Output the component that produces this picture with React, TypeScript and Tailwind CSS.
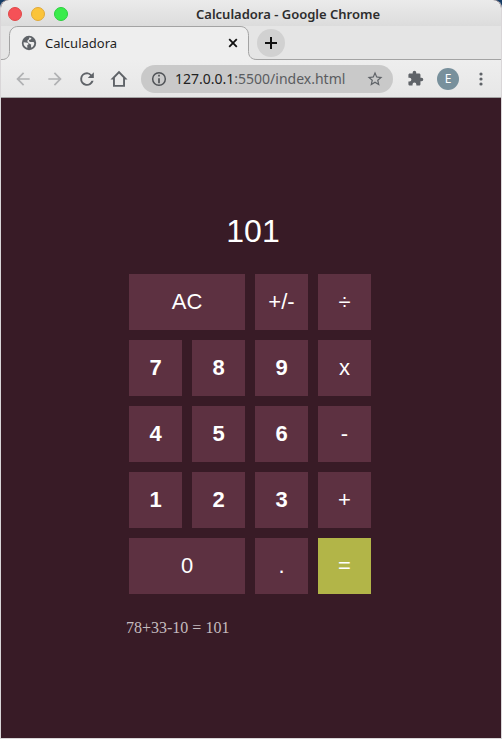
import React, { useState } from "react";

type Key = { label: string; className?: string };

const keys: Key[] = [
  { label: "AC", className: "col-span-2" },
  { label: "+/-" },
  { label: "÷" },
  { label: "7", className: "font-bold" },
  { label: "8", className: "font-bold" },
  { label: "9", className: "font-bold" },
  { label: "x" },
  { label: "4", className: "font-bold" },
  { label: "5", className: "font-bold" },
  { label: "6", className: "font-bold" },
  { label: "-" },
  { label: "1", className: "font-bold" },
  { label: "2", className: "font-bold" },
  { label: "3", className: "font-bold" },
  { label: "+" },
  { label: "0", className: "col-span-2" },
  { label: "." },
];

function TitleBar() {
  return (
    <header className="flex h-[26px] items-center rounded-t-lg bg-linear-to-b from-[#ebebeb] to-[#dcdcdc] pt-[2px] pl-[7px]">
      <div className="flex gap-[9px]">
        <button aria-label="Close" className="size-[14px] rounded-full border border-[#e04848] bg-[#f55157]" />
        <button aria-label="Minimize" className="size-[14px] rounded-full border border-[#e0a93a] bg-[#fbc43a]" />
        <button aria-label="Maximize" className="size-[14px] rounded-full border border-[#2bd03e] bg-[#3aec4c]" />
      </div>
      <h1 className="flex-1 pl-32 text-[13px] leading-5 font-semibold whitespace-nowrap text-[#2d2d2d]">
        Calculadora - Google Chrome
      </h1>
    </header>
  );
}

function TabStrip() {
  return (
    <div className="flex h-[34px] items-center bg-[#e5e5e5] shadow-[inset_0_-1px_0_#a3a3a3]">
      <div className="relative flex h-full w-64 shrink-0 items-center">
        <svg className="absolute inset-0" width="256" height="34" viewBox="0 0 256 34" aria-hidden="true">
          <path
            d="M0 33.5H1C5.500 33.5 8.500 31 8.500 25.500V9.500C8.500 4 12 .5 17 .5H239C244.500 .5 247.500 4 247.500 9.500V25.500C247.500 31 251 33.500 256 33.500V34H0Z"
            fill="#eeeeee"
          />
          <path
            d="M0 33.500H1C5.500 33.500 8.500 31 8.500 25.500V9.500C8.500 4 12 .5 17 .5H239C244.500 .5 247.500 4 247.500 9.500V25.500C247.500 31 251 33.500 256 33.500"
            fill="none"
            stroke="#a3a3a3"
          />
        </svg>
        <div className="relative flex flex-1 items-center pr-4 pl-5">
          <svg width="16" height="16" viewBox="0 0 16 16" aria-hidden="true">
            <circle cx="8" cy="8" r="7.200" fill="#5f6368" />
            <path
              d="M2.600 7.200 6.300 7.800C7.200 8 7.600 8.600 7.500 9.500L6.300 10.100V12.900C3.900 12 2.200 10 2.600 7.200Z M8.300 2.600 10.500 3 9.700 4.600 8 4.900 7.900 6.300 9.300 7.100 12.600 6.900 13.300 8.200C13.100 10.300 12 11.800 10.400 12.700L9.900 10.800 10.300 9.700 8.600 8.700 6.500 6.900 6.500 5.200 8 4.200Z"
              fill="#eeeeee"
            />
          </svg>
          <span className="ml-2 flex-1 text-[13px] leading-5 text-[#1f1f1f]">Calculadora</span>
          <button aria-label="Close tab" className="flex size-4 items-center justify-center">
            <svg width="10" height="10" viewBox="0 0 10 10" stroke="#111" strokeWidth="1.800">
              <path d="m1.200 1.200 7.600 7.600m0-7.600-7.600 7.600" />
            </svg>
          </button>
        </div>
      </div>
      <button aria-label="New tab" className="flex size-7 items-center justify-center rounded-full bg-[#d1d1d1]">
        <svg width="12" height="12" viewBox="0 0 12 12" stroke="#111" strokeWidth="2">
          <path d="M6 0v12M0 6h12" />
        </svg>
      </button>
    </div>
  );
}

type ToolButtonProps = { label: string; d: string; color?: string; size?: number };

function ToolButton({ label, d, color = "fill-[#5f6368]", size = 20 }: ToolButtonProps) {
  return (
    <button aria-label={label} className="flex size-5 items-center justify-center">
      <svg width={size} height={size} viewBox="0 0 24 24" className={color}>
        <path d={d} />
      </svg>
    </button>
  );
}

function Toolbar() {
  return (
    <nav className="flex h-[38px] items-center border-b border-[#a3a3a3] bg-linear-to-b from-[#eeeeee] to-[#e7e7e7] pl-3">
      <div className="flex gap-3">
        <ToolButton
          label="Back"
          color="fill-[#b0b1b3]"
          d="M20 11H7.830l5.590-5.590L12 4l-8 8 8 8 1.410-1.410L7.830 13H20v-2z"
        />
        <ToolButton
          label="Forward"
          color="fill-[#b0b1b3]"
          d="m12 4-1.410 1.410L16.170 11H4v2h12.170l-5.580 5.590L12 20l8-8z"
        />
        <ToolButton
          label="Reload"
          d="M17.400 6.600A7.900 7.900 0 0 0 12 3.800a8.200 8.200 0 1 0 7.930 10.400h-2.600A5.800 5.800 0 1 1 12 6.200c1.500 0 2.840.6 3.840 1.600L13 10.800h7.200V3.800l-2.800 2.800z"
        />
        <ToolButton label="Home" d="M12 2.200 1.800 12.600H4.800V21.400h14.400v-8.800h3L12 2.200Zm0 3.200 4.900 5V19.100H7.100v-8.700l4.900-5Z" />
      </div>
      <div className="ml-3 flex h-7 flex-1 items-center rounded-full bg-[#c9c9c9] px-2">
        <svg width="20" height="20" viewBox="0 0 24 24" fill="#4f5256" aria-hidden="true">
          <path d="M11 7h2v2h-2zm0 4h2v6h-2zm1-7.500a8.500 8.500 0 1 0 0 17 8.500 8.500 0 0 0 0-17Zm0 15.200a6.700 6.700 0 1 1 0-13.400 6.700 6.700 0 0 1 0 13.400Z" />
        </svg>
        <span className="ml-[6px] flex-1 text-sm leading-5 whitespace-nowrap text-[#5a5c60]">
          <span className="text-[#222]">127.0.0.1</span>:5500/index.html
        </span>
        <ToolButton
          label="Bookmark this page"
          size={18}
          d="m22 9.240-7.190-.62L12 2 9.190 8.630 2 9.240l5.460 4.730L5.820 21 12 17.270 18.180 21l-1.630-7.030L22 9.240zM12 15.400l-3.760 2.270 1-4.280-3.320-2.880 4.380-.38L12 6.100l1.710 4.040 4.380.38-3.320 2.880 1 4.280L12 15.400z"
        />
      </div>
      <div className="ml-3 flex w-24 items-center">
        <ToolButton
          label="Extensions"
          size={17}
          d="M20.500 11H19V7c0-1.100-.9-2-2-2h-4V3.500a2.500 2.500 0 0 0-5 0V5H4c-1.100 0-2 .9-2 2v3.800h1.500a2.700 2.700 0 0 1 0 5.400H2V20c0 1.100.9 2 2 2h3.800v-1.500a2.700 2.700 0 0 1 5.400 0V22H17c1.100 0 2-.9 2-2v-4h1.500a2.500 2.500 0 0 0 0-5z"
        />
        <button
          aria-label="Profile"
          className="ml-3 flex size-[22px] items-center justify-center rounded-full bg-[#78909c] text-xs text-white"
        >
          E
        </button>
        <button aria-label="Menu" className="ml-3 flex size-5 items-center justify-center">
          <svg width="4" height="14" viewBox="0 0 4 14" fill="#5f6368">
            <circle cx="2" cy="2" r="1.600" />
            <circle cx="2" cy="7" r="1.600" />
            <circle cx="2" cy="12" r="1.600" />
          </svg>
        </button>
      </div>
    </nav>
  );
}

function Calculator() {
  const [display, setDisplay] = useState("101");
  const press = (label: string) => {
    if (label === "AC") setDisplay("0");
    else if (/^[0-9.]$/.test(label)) setDisplay((v) => (v === "0" ? label : v + label));
  };
  return (
    <main className="flex flex-1 flex-col items-center bg-[#381b26] pt-[109px] pb-20">
      <div className="w-[250px] font-['Liberation_Sans',Arial,sans-serif] text-white">
        <output className="block pl-1 text-center text-[32px] leading-[48px]">{display}</output>
        <div className="mx-[3px] mt-[19px] grid w-[242px] grid-cols-4 gap-[10px]">
          {keys.map((key) => (
            <button
              key={key.label}
              onClick={() => press(key.label)}
              className={`h-14 bg-[#5d3141] pb-[2px] text-[22px] ${key.className ?? ""}`}
            >
              {key.label}
            </button>
          ))}
          <button className="h-14 bg-[#b2b548] pb-[2px] text-[22px]">=</button>
        </div>
        <p className="mt-6 font-['Liberation_Serif',serif] text-base leading-5 text-[#c4bcbf]">78+33-10 = 101</p>
      </div>
    </main>
  );
}

export default function App() {
  return (
    <div className="flex min-h-screen flex-col bg-[#173d66] font-['Noto_Sans',sans-serif]">
      <div className="flex flex-1 flex-col rounded-t-lg border border-t-0 border-[#d9d6d8] bg-[#381b26]">
        <TitleBar />
        <TabStrip />
        <Toolbar />
        <Calculator />
      </div>
    </div>
  );
}
